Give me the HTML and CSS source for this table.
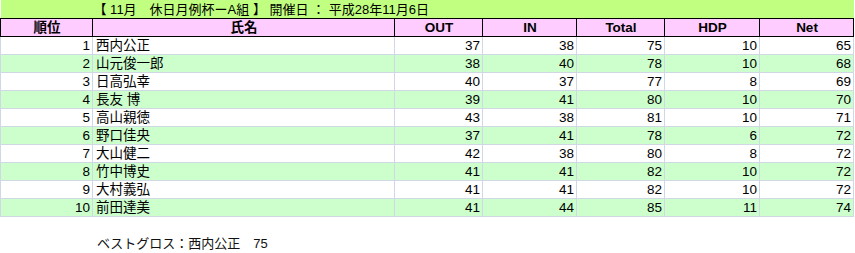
FILE: index.html
```html
<!DOCTYPE html>
<html lang="ja">
<head>
<meta charset="utf-8">
<link rel="stylesheet" href="styles.css">
</head>
<body>
<table class="score">
  <colgroup>
    <col class="c-rank"><col class="c-name"><col class="c-num1"><col class="c-num2"><col class="c-num3"><col class="c-num4"><col class="c-num5">
  </colgroup>
  <tr class="title"><td></td><td colspan="6">【 11月　休日月例杯ーA組 】 開催日 ： 平成28年11月6日</td></tr>
  <tr class="head"><th>順位</th><th>氏名</th><th>OUT</th><th>IN</th><th>Total</th><th>HDP</th><th>Net</th></tr>
  <tr><td class="n">1</td><td class="name">西内公正</td><td class="n">37</td><td class="n">38</td><td class="n">75</td><td class="n">10</td><td class="n">65</td></tr>
  <tr class="g"><td class="n">2</td><td class="name">山元俊一郎</td><td class="n">38</td><td class="n">40</td><td class="n">78</td><td class="n">10</td><td class="n">68</td></tr>
  <tr><td class="n">3</td><td class="name">日高弘幸</td><td class="n">40</td><td class="n">37</td><td class="n">77</td><td class="n">8</td><td class="n">69</td></tr>
  <tr class="g"><td class="n">4</td><td class="name">長友 博</td><td class="n">39</td><td class="n">41</td><td class="n">80</td><td class="n">10</td><td class="n">70</td></tr>
  <tr><td class="n">5</td><td class="name">高山親徳</td><td class="n">43</td><td class="n">38</td><td class="n">81</td><td class="n">10</td><td class="n">71</td></tr>
  <tr class="g"><td class="n">6</td><td class="name">野口佳央</td><td class="n">37</td><td class="n">41</td><td class="n">78</td><td class="n">6</td><td class="n">72</td></tr>
  <tr><td class="n">7</td><td class="name">大山健二</td><td class="n">42</td><td class="n">38</td><td class="n">80</td><td class="n">8</td><td class="n">72</td></tr>
  <tr class="g"><td class="n">8</td><td class="name">竹中博史</td><td class="n">41</td><td class="n">41</td><td class="n">82</td><td class="n">10</td><td class="n">72</td></tr>
  <tr><td class="n">9</td><td class="name">大村義弘</td><td class="n">41</td><td class="n">41</td><td class="n">82</td><td class="n">10</td><td class="n">72</td></tr>
  <tr class="g"><td class="n">10</td><td class="name">前田達美</td><td class="n">41</td><td class="n">44</td><td class="n">85</td><td class="n">11</td><td class="n">74</td></tr>
</table>
<p class="best">ベストグロス：西内公正　75</p>
</body>
</html>
```
FILE: styles.css
```css
html, body {
  margin: 0;
  padding: 0;
  background: #ffffff;
}
body {
  font-family: "Liberation Sans", "Noto Sans CJK JP", sans-serif;
  font-size: 13px;
  color: #000;
}
.score {
  border-collapse: collapse;
  table-layout: fixed;
  width: 853px;
  font-size: 13.5px;
}
.c-rank { width: 92px; }
.c-name { width: 302px; }
.c-num1 { width: 88px; }
.c-num2 { width: 94px; }
.c-num3 { width: 88px; }
.c-num4 { width: 95px; }
.c-num5 { width: 94px; }
.score td, .score th {
  height: 17px;
  padding: 0 2px 0 3px;
  line-height: 17px;
  border: 1px solid #d0d7e5;
  white-space: nowrap;
  overflow: hidden;
}
.score tr.title td {
  background: #c0ff80;
  border: none;
  height: 18px;
  padding: 0 1px;
  font-size: 13px;
}
.score tr.head th {
  background: #ffccff;
  border: 1px solid #000;
  font-weight: bold;
  text-align: center;
  height: 17px;
}
.score tr.g td {
  background: #ccffcc;
}
.score td.n {
  text-align: right;
}
.score td.name {
  text-align: left;
}
.best {
  margin: 18px 0 0 97px;
  line-height: 17px;
  color: #111;
}
```
